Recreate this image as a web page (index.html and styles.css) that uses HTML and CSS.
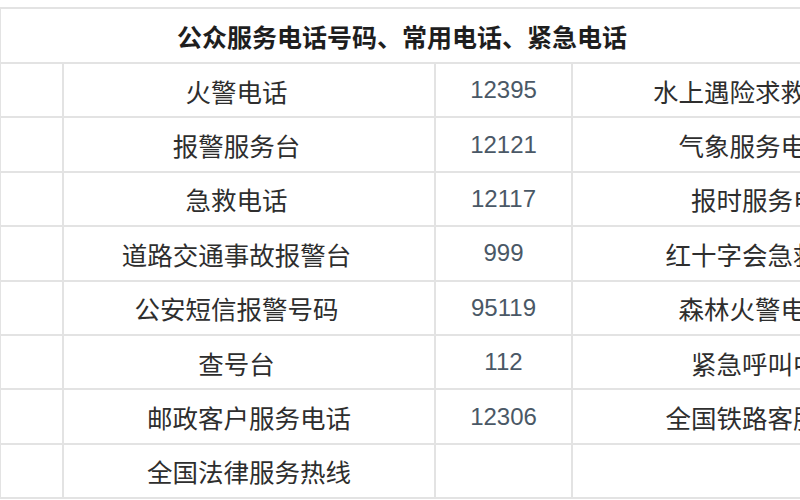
FILE: index.html
```html
<!DOCTYPE html>
<html lang="zh-CN">
<head>
<meta charset="utf-8">
<title>公众服务电话号码、常用电话、紧急电话</title>
<link rel="stylesheet" href="styles.css">
</head>
<body>
<div class="page">
  <table class="phones">
    <colgroup>
      <col class="c0"><col class="c1"><col class="c2"><col class="c3">
    </colgroup>
    <thead>
      <tr><th colspan="4" class="title">公众服务电话号码、常用电话、紧急电话</th></tr>
    </thead>
    <tbody>
      <tr><td></td><td class="name shift">火警电话</td><td class="num">12395</td><td class="name shift">水上遇险求救电话</td></tr>
      <tr><td></td><td class="name shift">报警服务台</td><td class="num">12121</td><td class="name shift">气象服务电话</td></tr>
      <tr><td></td><td class="name shift">急救电话</td><td class="num">12117</td><td class="name">报时服务电话</td></tr>
      <tr><td></td><td class="name shift">道路交通事故报警台</td><td class="num">999</td><td class="name">红十字会急救电话</td></tr>
      <tr><td></td><td class="name shift">公安短信报警号码</td><td class="num">95119</td><td class="name shift">森林火警电话</td></tr>
      <tr><td></td><td class="name shift">查号台</td><td class="num">112</td><td class="name">紧急呼叫中心</td></tr>
      <tr><td></td><td class="name">邮政客户服务电话</td><td class="num">12306</td><td class="name">全国铁路客服中心</td></tr>
      <tr><td></td><td class="name">全国法律服务热线</td><td class="num"></td><td class="name"></td></tr>
    </tbody>
  </table>
</div>
</body>
</html>
```
FILE: styles.css
```css
html, body {
  margin: 0;
  padding: 0;
  background: #ffffff;
  overflow: hidden;
}
.page {
  width: 800px;
  height: 500px;
  overflow: hidden;
  padding-top: 7px;
  box-sizing: border-box;
  font-family: "Liberation Sans", "Noto Sans CJK SC", sans-serif;
}
.phones {
  border-collapse: collapse;
  table-layout: fixed;
  width: 963px;
  margin-left: -1px;
}
.c0 { width: 63px; }
.c1 { width: 372px; }
.c2 { width: 137px; }
.c3 { width: 391px; }
.phones th,
.phones td {
  border: 2px solid #e3e3e3;
  padding: 0;
  text-align: center;
  vertical-align: middle;
  white-space: nowrap;
  overflow: hidden;
}
.title {
  height: 53px;
  font-size: 25px;
  font-weight: bold;
  color: #1e1e1e;
  padding-right: 159px !important;
}
.phones tbody td {
  height: 52.4px;
}
.name {
  font-size: 25.5px;
  color: #2e2e2e;
}
.num {
  font-size: 24px;
  color: #4a5866;
}
.shift { padding-right: 25px !important; }
```
